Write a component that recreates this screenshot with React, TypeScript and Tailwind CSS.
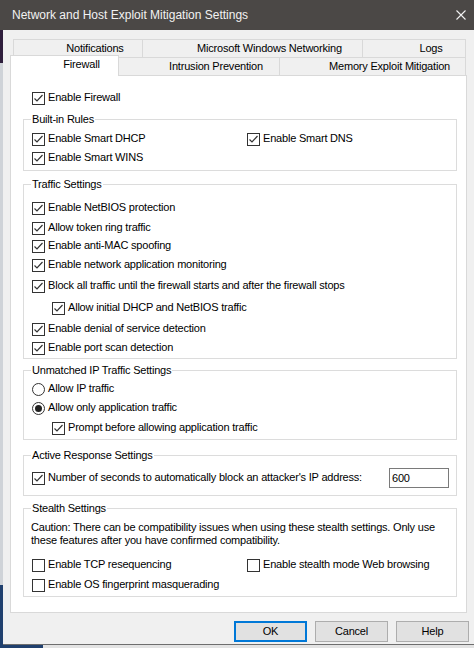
import React from 'react';

// Win10-style firewall settings dialog

function Box({ on }: { on: boolean }) {
  return (
    <span className="w-[13px] h-[13px] shrink-0 border border-[#333333] bg-white flex items-center justify-center">
      {on && (
        <svg width="11" height="11" viewBox="0 0 11 11">
          <polyline points="1.5,5.5 4,8 9.5,2" fill="none" stroke="#333333" strokeWidth="1.2" />
        </svg>
      )}
    </span>
  );
}

function Radio({ on }: { on: boolean }) {
  return (
    <svg width="13" height="13" viewBox="0 0 13 13" className="shrink-0">
      <circle cx="6.5" cy="6.5" r="6" fill="white" stroke="#333333" />
      {on && <circle cx="6.5" cy="6.5" r="3.5" fill="#222222" />}
    </svg>
  );
}

function Opt({ label, on = true, radio = false, className = '' }: { label: string; on?: boolean; radio?: boolean; className?: string }) {
  return (
    <div className={'flex items-center h-[13px] ' + className}>
      {radio ? <Radio on={on} /> : <Box on={on} />}
      <span className="ml-[3px] leading-[13px] mb-[2px] whitespace-nowrap">{label}</span>
    </div>
  );
}

function Group({ title, className = '', children }: { title: string; className?: string; children: React.ReactNode }) {
  return (
    <div className={'relative border border-[#dcdcdc] pl-[8px] ' + className}>
      <span className="absolute left-[7px] -top-[8px] bg-white px-[1px] leading-[14px] whitespace-nowrap">{title}</span>
      {children}
    </div>
  );
}

function Tab({ label, className = '' }: { label: string; className?: string }) {
  return (
    <div className={'h-[18px] border border-b-0 border-[#d9d9d9] bg-[#f0f0f0] flex items-center justify-center pl-[34px] whitespace-nowrap ' + className}>
      {label}
    </div>
  );
}

function Btn({ label, focus = false }: { label: string; focus?: boolean }) {
  return (
    <button
      className={
        'w-[73px] h-[21px] bg-[#e1e1e1] flex items-center justify-center ' +
        (focus ? 'border-2 border-[#0078d7]' : 'border border-[#adadad]')
      }
    >
      {label}
    </button>
  );
}

export default function App() {
  return (
    <div className="w-[474px] h-[648px] overflow-hidden bg-[#e3e3e3] font-['Liberation_Sans',Arial,sans-serif] text-[11px] tracking-[-0.2px] text-black">
      {/* title bar */}
      <div className="h-[30px] bg-[#4b4846] flex items-center pl-[12px] pr-[8px]">
        <span className="text-[12px] tracking-normal text-[#f2f2f2] whitespace-nowrap">Network and Host Exploit Mitigation Settings</span>
        <svg width="10" height="10" viewBox="0 0 10 10" className="ml-auto">
          <path d="M0.5 0.5 L9.5 9.5 M9.5 0.5 L0.5 9.5" stroke="#f2f2f2" strokeWidth="1.1" />
        </svg>
      </div>

      <div className="flex h-[615px]">
        {/* desktop behind the window */}
        <div className="w-[3px] flex flex-col">
          <div className="h-[33px] bg-[#2e1e3c]" />
          <div className="flex-1 bg-[#cfd3d8]" />
          <div className="h-[60px] bg-[#20406e]" />
        </div>

        <div className="flex-1 bg-[#f0f0f0] pl-[7px] pt-[9px] border-b border-[#6e6e6e]">
          {/* tab strip, two rows */}
          <div className="flex ml-[3px] w-[453px]">
            <Tab label="Notifications" className="w-[130px]" />
            <Tab label="Microsoft Windows Networking" className="w-[221px] -ml-px" />
            <Tab label="Logs" className="w-[104px] -ml-px" />
          </div>
          <div className="flex h-[18px] relative z-10">
            <div className="w-[109px] h-[21px] -mt-[2px] bg-white border border-b-0 border-[#d9d9d9] flex items-center justify-center pl-[34px] pb-[3px]">
              Firewall
            </div>
            <Tab label="Intrusion Prevention" className="w-[162px] -ml-px" />
            <Tab label="Memory Exploit Mitigation" className="w-[187px] -ml-px" />
          </div>

          {/* page */}
          <div className="bg-white border border-[#d9d9d9] w-[457px] h-[538px] pt-[16px] pl-[12px] pr-[9px]">
            <Opt label="Enable Firewall" className="ml-[9px]" />

            <Group title="Built-in Rules" className="mt-[14px] pt-[13px] pb-[5px]">
              <div className="grid grid-cols-[215px_1fr] gap-y-[6px]">
                <Opt label="Enable Smart DHCP" />
                <Opt label="Enable Smart DNS" />
                <Opt label="Enable Smart WINS" />
              </div>
            </Group>

            <Group title="Traffic Settings" className="mt-[13px] pt-[17px] pb-[3px]">
              <Opt label="Enable NetBIOS protection" />
              <Opt label="Allow token ring traffic" className="mt-[7px]" />
              <Opt label="Enable anti-MAC spoofing" className="mt-[5px]" />
              <Opt label="Enable network application monitoring" className="mt-[6px]" />
              <Opt label="Block all traffic until the firewall starts and after the firewall stops" className="mt-[8px]" />
              <Opt label="Allow initial DHCP and NetBIOS traffic" className="mt-[9px] ml-[20px]" />
              <Opt label="Enable denial of service detection" className="mt-[8px]" />
              <Opt label="Enable port scan detection" className="mt-[6px]" />
            </Group>

            <Group title="Unmatched IP Traffic Settings" className="mt-[11px] pt-[12px] pb-[4px]">
              <Opt label="Allow IP traffic" radio on={false} />
              <Opt label="Allow only application traffic" radio className="mt-[6px]" />
              <Opt label="Prompt before allowing application traffic" className="mt-[7px] ml-[20px]" />
            </Group>

            <Group title="Active Response Settings" className="mt-[15px] pt-[12px] pb-[7px]">
              <div className="flex items-center h-[20px]">
                <Opt label="Number of seconds to automatically block an attacker's IP address:" />
                <div className="ml-auto mr-[7px] w-[60px] h-[20px] border border-[#7a7a7a] bg-white flex items-center pl-[2px]">
                  600
                </div>
              </div>
            </Group>

            <Group title="Stealth Settings" className="mt-[12px] pt-[12px] pb-[4px]">
              <div className="leading-[13px] -ml-px whitespace-nowrap">
                <div>Caution: There can be compatibility issues when using these stealth settings. Only use</div>
                <div>these features after you have confirmed compatibility.</div>
              </div>
              <div className="grid grid-cols-[215px_1fr] gap-y-[7px] mt-[12px]">
                <Opt label="Enable TCP resequencing" on={false} />
                <Opt label="Enable stealth mode Web browsing" on={false} />
                <Opt label="Enable OS fingerprint masquerading" on={false} />
              </div>
            </Group>
          </div>

          {/* dialog buttons */}
          <div className="flex gap-[8px] ml-[224px] mt-[8px]">
            <Btn label="OK" focus />
            <Btn label="Cancel" />
            <Btn label="Help" />
          </div>
        </div>
      </div>

      <div className="flex h-[3px]">
        <div className="w-[43px] bg-[#20406e]" />
        <div className="flex-1 bg-[#e3e3e3]" />
      </div>
    </div>
  );
}
